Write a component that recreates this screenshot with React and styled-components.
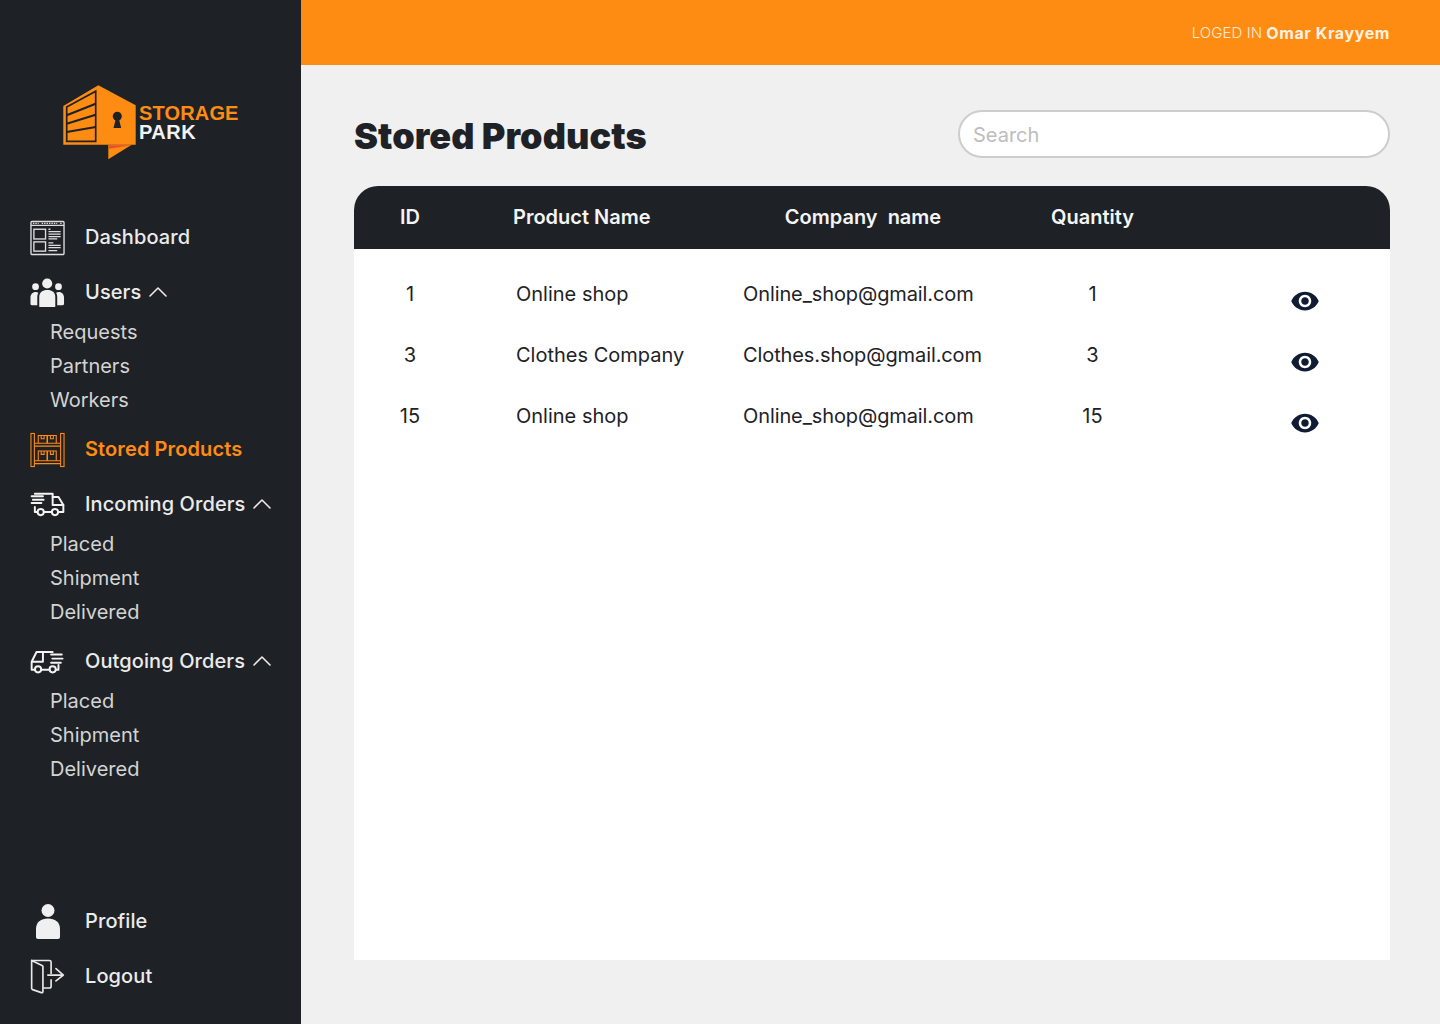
import React from 'react';
import styled, { createGlobalStyle } from 'styled-components';
import { ChevronUp } from 'lucide-react';
import { MdVisibility } from 'react-icons/md';

const GlobalStyle = createGlobalStyle`
    * { box-sizing: border-box; }
    html, body { margin: 0; padding: 0; }
    body { font-family: "Inter", "Liberation Sans", sans-serif; background: #f0f0f0; }
`

const PAGE = styled.div`
    display: flex;
    width: 1440px;
    height: 1024px;
    overflow: hidden;
`

const SIDEBAR = styled.aside`
    display: flex;
    flex-direction: column;
    width: 301px;
    flex-shrink: 0;
    padding: 85px 0 30px 30px;
    background: #1e2227;
`

const LOGO = styled.div`
    display: flex;
    align-items: flex-start;
    gap: 3px;
    height: 75px;
    margin: 0 0 60px 33px;
`

const LOGOTEXT = styled.div`
    display: flex;
    flex-direction: column;
    padding-top: 18.5px;
    font-family: "Liberation Sans", Arial, sans-serif;
    font-size: 20px;
    font-weight: 700;
    line-height: 19px;
    letter-spacing: 0.15px;
    color: #f2f2f2;

    span:first-child { color: #ff8c12; }
    span:last-child { letter-spacing: 0.5px; }
`

const NAVROW = styled.div`
    display: flex;
    align-items: center;
    height: 35px;
    padding-bottom: 2px;
    margin-top: ${p => p.$top || 0}px;
    font-size: 20px;
    font-weight: ${p => p.$active ? 600 : 500};
    color: ${p => p.$active ? '#ff8c12' : '#ebebeb'};
    letter-spacing: 0.1px;
`

const NAVICON = styled.span`
    display: flex;
    align-items: center;
    justify-content: center;
    width: 35px;
    height: 35px;
    margin: 0 20px -2px 0;
    flex-shrink: 0;
`

const CARET = styled(ChevronUp)`
    margin-left: 1px;
    flex-shrink: 0;
`

const SUBLIST = styled.div`
    display: flex;
    flex-direction: column;
    margin-top: 5px;
    padding-left: 20px;
`

const SUBITEM = styled.div`
    height: 34px;
    line-height: 34px;
    font-size: 20px;
    color: #d4d4d4;
`

const SPACER = styled.div`
    flex: 1;
`

const MAIN = styled.main`
    display: flex;
    flex-direction: column;
    flex: 1;
    min-width: 0;
`

const TOPBAR = styled.header`
    display: flex;
    align-items: center;
    justify-content: flex-end;
    height: 65px;
    padding-right: 50px;
    background: #ff8c12;
    font-size: 15px;
    font-weight: 300;
    letter-spacing: 0.1px;
    color: #ffe9d2;

    b {
        margin-left: 4px;
        font-size: 16px;
        font-weight: 700;
        letter-spacing: 0.6px;
        color: #fff2e4;
    }
`

const CONTENT = styled.div`
    display: flex;
    flex-direction: column;
    flex: 1;
    padding: 45px 50px 64px 53px;
`

const HEAD = styled.div`
    display: flex;
    align-items: center;
    justify-content: space-between;
    height: 48px;
    margin-bottom: 28px;
`

const TITLE = styled.h1`
    margin: 4px 0 0;
    font-size: 36px;
    font-weight: 900;
    letter-spacing: 0.08px;
    color: #1e2227;
`

const SEARCH = styled.input`
    width: 432px;
    height: 48px;
    padding: 2px 13px 0;
    border: 2px solid #cdcdcd;
    border-radius: 24px;
    background: #fff;
    font-family: inherit;
    font-size: 20px;
    outline: none;

    &::placeholder { color: #bdbdbd; }
`

const TABLE = styled.section`
    flex: 1;
    background: #fff;
    border-radius: 24px 24px 0 0;
`

const ROW = styled.div`
    display: grid;
    grid-template-columns: 112px 277px 240px 219px 188px;
    align-items: center;
`

const HEADROW = styled(ROW)`
    height: 63px;
    margin-bottom: 14px;
    padding-bottom: 1px;
    background: #1e2227;
    border-radius: 24px 24px 0 0;
    font-size: 20px;
    font-weight: 600;
    letter-spacing: 0.08px;
    color: #f4f4f4;
`

const BODYROW = styled(ROW)`
    height: 61px;
    font-size: 20px;
    color: #1e2227;
`

const CELL = styled.div`
    text-align: ${p => p.$center ? 'center' : 'left'};
    padding-left: ${p => p.$pad || 0}px;
    letter-spacing: ${p => p.$tight ? '-0.1px' : '0'};
    white-space: pre;
`

const EYE = styled(MdVisibility)`
    justify-self: end;
    margin: 14px 70px 0 0;
    color: #0f1c33;
`

const DashboardIcon = () => (
    <svg width="36" height="36" viewBox="0 0 36 36" fill="none" stroke="#dedede">
        <rect x="1" y="1" width="34" height="34" rx="1" strokeWidth="1.4" />
        <path d="M1 5h34" strokeWidth="1.4" />
        <path d="M3 3h6M12 3h16M31 3h2" strokeWidth="1.2" strokeDasharray="1.5 1" />
        <rect x="4" y="9" width="12" height="10" strokeWidth="1.4" />
        <rect x="4" y="22" width="12" height="9.500" strokeWidth="1.4" />
        <path d="M19 9h2M19 11.500h12.500M19 14h12.500M19 16.500h12.500M19 19h9M19 23h5M19 25.500h12.500M19 28h12.500M19 31h9" strokeWidth="1.3" />
    </svg>
)

const UsersIcon = () => (
    <svg width="36" height="32" viewBox="0 0 36 32" fill="#f0f0f0">
        <circle cx="17.700" cy="6.200" r="5.200" />
        <circle cx="5.700" cy="9.500" r="3.500" />
        <circle cx="29.300" cy="9.500" r="3.500" />
        <path d="M9.500 29.500V20c0-4.500 3.300-7 8.300-7s8.200 2.500 8.200 7v9.500c0 .6-.5 1-1 1H10.500c-.5 0-1-.4-1-1z" />
        <path d="M7.500 28.500H2c-1 0-1.500-.5-1.500-1.500v-6c0-3.600 2.200-6 5.300-6 1.100 0 2 .3 2.800.8C7.800 17.300 7.500 18.600 7.500 20z" />
        <path d="M28 28.500h5.500c1 0 1.500-.5 1.500-1.500v-6c0-3.600-2.200-6-5.300-6-1.100 0-2 .3-2.800.8.700 1.500 1.100 2.800 1.100 4.200z" />
    </svg>
)

const ShelfIcon = () => (
    <svg width="36" height="36" viewBox="0 0 36 36" fill="none" stroke="#ff8c12" strokeWidth="1.100">
        <rect x="1" y="1" width="3.500" height="34" />
        <rect x="31.500" y="1" width="3.500" height="34" />
        <path d="M4.500 11h27M4.500 14h27M4.500 29h27M4.500 32h27" />
        <path d="M8.500 11V3h9v8M18 11V3h9v8M8.500 29V19h9v10M18 29V19h9v10" />
        <path d="M11.500 3v3.500h3V3M21 3v3.500h3V3M11.500 19v3.500h3V19M21 19v3.500h3V19" />
    </svg>
)

const InTruckIcon = () => (
    <svg width="36" height="26" viewBox="0 0 36 26" fill="none" stroke="#f4f4f4" strokeWidth="2" strokeLinecap="round" strokeLinejoin="round">
        <path d="M5 1.500h18.300V13h11" />
        <path d="M23.300 4.700h6L34.300 13v7.300h-5.400" />
        <path d="M22.500 20.300h-8.300M7.800 20.300H5v-5.300" />
        <circle cx="11" cy="20.300" r="3.200" />
        <circle cx="25.700" cy="20.300" r="3.200" />
        <path d="M1.700 4h11.600M3 7.500h11M1.700 11h10" />
    </svg>
)

const OutTruckIcon = () => (
    <svg width="36" height="26" viewBox="0 0 36 26" fill="none" stroke="#f4f4f4" strokeWidth="2" strokeLinecap="round" strokeLinejoin="round">
        <path d="M23.300 2.700H6.700L1.700 12.700V21h3.400M1.700 12.700h11.600V2.700" />
        <path d="M11.500 21h8.600M26.700 21h2.600v-5" />
        <circle cx="8.300" cy="20.500" r="3.200" />
        <circle cx="23.300" cy="20.500" r="3.200" />
        <path d="M21.700 5.300h11M23 9.500h10.500M21.700 13.700h10" />
    </svg>
)

const ProfileIcon = () => (
    <svg width="24" height="35" viewBox="0 0 24 35" fill="#f0f0f0">
        <circle cx="12" cy="6.500" r="6.500" />
        <path d="M0 33V25c0-7 5-10.500 12-10.500S24 18 24 25v8c0 1-.8 2-2 2H2c-1.200 0-2-1-2-2z" />
    </svg>
)

const LogoutIcon = () => (
    <svg width="36" height="36" viewBox="0 0 36 36" fill="none" stroke="#e8e8e8" strokeWidth="1.700" strokeLinecap="round" strokeLinejoin="round">
        <path d="M1.700 1H20c1.200 0 1.700.6 1.700 1.700v11.600M21.700 21v6.500c0 1.200-.6 1.800-1.700 1.800h-6" />
        <path d="M1.700 1v28.500c0 .7.300 1.200 1 1.500l9 3.100c.9.300 1.600-.2 1.600-1.100V7.500c0-.7-.3-1.100-.9-1.400z" />
        <path d="M18.300 16h16M26.700 9.300l7.600 6.700-7.600 6" />
    </svg>
)

const LogoIcon = () => (
    <svg width="73" height="75" viewBox="0 0 73 75">
        <path d="M.3 21 35.300.3 72.700 20.300V59.700H.3z" fill="#ff8c12" />
        <path d="M45.300 59.700H68.700L45.300 74.300z" fill="#ff8c12" />
        <path d="M46 60.300H68.700L46 63.700z" fill="#e8502a" />
        <g fill="none" stroke="#1e2227">
            <path d="M3.700 22 32.700 6.300V56.300H3.700z" strokeWidth="1.700" />
            <path d="M3.700 30.300 32.700 18.700M3.700 38.700 32.700 29.700M3.700 47 32.700 42" strokeWidth="2" />
        </g>
        <circle cx="54.300" cy="31.300" r="4.500" fill="#1e2227" />
        <path d="M53 33h2.700l2.500 10H50.500z" fill="#1e2227" />
    </svg>
)

const Caret = () => <CARET size={32} strokeWidth={1.2} />

const SubMenu = ({ items }) => (
    <SUBLIST>
        {items.map(item => <SUBITEM key={item}>{item}</SUBITEM>)}
    </SUBLIST>
)

const products = [
    { id: 1, name: 'Online shop', email: 'Online_shop@gmail.com', quantity: 1 },
    { id: 3, name: 'Clothes Company', email: 'Clothes.shop@gmail.com', quantity: 3 },
    { id: 15, name: 'Online shop', email: 'Online_shop@gmail.com', quantity: 15 },
];

const orderSteps = ['Placed', 'Shipment', 'Delivered'];

const App = () => {
    return (
        <PAGE>
            <GlobalStyle />
            <SIDEBAR>
                <LOGO>
                    <LogoIcon />
                    <LOGOTEXT>
                        <span>STORAGE</span>
                        <span>PARK</span>
                    </LOGOTEXT>
                </LOGO>
                <NAVROW><NAVICON><DashboardIcon /></NAVICON>Dashboard</NAVROW>
                <NAVROW $top={20}><NAVICON><UsersIcon /></NAVICON>Users<Caret /></NAVROW>
                <SubMenu items={['Requests', 'Partners', 'Workers']} />
                <NAVROW $top={15} $active><NAVICON><ShelfIcon /></NAVICON>Stored Products</NAVROW>
                <NAVROW $top={20}><NAVICON><InTruckIcon /></NAVICON>Incoming Orders<Caret /></NAVROW>
                <SubMenu items={orderSteps} />
                <NAVROW $top={15}><NAVICON><OutTruckIcon /></NAVICON>Outgoing Orders<Caret /></NAVROW>
                <SubMenu items={orderSteps} />
                <SPACER />
                <NAVROW><NAVICON><ProfileIcon /></NAVICON>Profile</NAVROW>
                <NAVROW $top={20}><NAVICON><LogoutIcon /></NAVICON>Logout</NAVROW>
            </SIDEBAR>
            <MAIN>
                <TOPBAR>LOGED IN <b>Omar Krayyem</b></TOPBAR>
                <CONTENT>
                    <HEAD>
                        <TITLE>Stored Products</TITLE>
                        <SEARCH placeholder="Search" />
                    </HEAD>
                    <TABLE>
                        <HEADROW>
                            <CELL $center>ID</CELL>
                            <CELL $pad={47}>Product Name</CELL>
                            <CELL $center>{'Company  name'}</CELL>
                            <CELL $center>Quantity</CELL>
                            <div />
                        </HEADROW>
                        {products.map(product => (
                            <BODYROW key={product.id}>
                                <CELL $center>{product.id}</CELL>
                                <CELL $pad={50}>{product.name}</CELL>
                                <CELL $tight>{product.email}</CELL>
                                <CELL $center>{product.quantity}</CELL>
                                <EYE size={30} />
                            </BODYROW>
                        ))}
                    </TABLE>
                </CONTENT>
            </MAIN>
        </PAGE>
    );
};

export default App;
